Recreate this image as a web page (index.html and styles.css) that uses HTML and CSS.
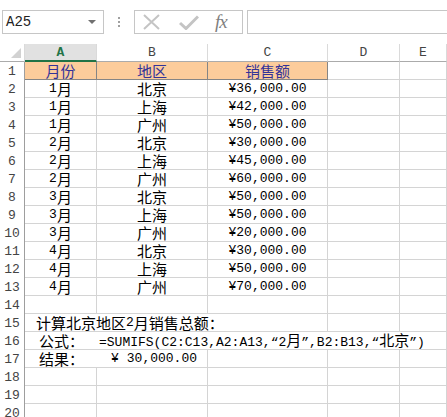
FILE: index.html
```html
<!DOCTYPE html>
<html>
<head>
<meta charset="utf-8">
<link rel="stylesheet" href="styles.css">
</head>
<body>
<div class="toolbar">
  <div class="namebox"><span class="nb-text">A25</span><span class="dd"></span></div>
  <div class="dots"><i></i><i></i><i></i></div>
  <div class="fxbox">
    <svg class="ico-x" width="17" height="16" viewBox="0 0 17 16"><path d="M1 1 L16 15 M16 1 L1 15" stroke="#c4c4c4" stroke-width="2" fill="none"/></svg>
    <svg class="ico-ok" width="20" height="15" viewBox="0 0 20 15"><path d="M1 8 L7 13.5 L19 1.5" stroke="#c4c4c4" stroke-width="3" fill="none"/></svg>
    <span class="fx">fx</span>
  </div>
  <div class="formula"></div>
</div>
<div class="sheet">
  <div class="corner"><span class="tri"></span></div>
  <div class="h sel">A</div><div class="h">B</div><div class="h">C</div><div class="h">D</div><div class="h">E</div>

  <div class="r">1</div><div class="c p"><span class="z">月份</span></div><div class="c p"><span class="z">地区</span></div><div class="c p"><span class="z">销售额</span></div><div class="c"></div><div class="c"></div>

  <div class="r">2</div><div class="c">1<span class="z">月</span></div><div class="c"><span class="z">北京</span></div><div class="c">¥36,000.00</div><div class="c"></div><div class="c"></div>
  <div class="r">3</div><div class="c">1<span class="z">月</span></div><div class="c"><span class="z">上海</span></div><div class="c">¥42,000.00</div><div class="c"></div><div class="c"></div>
  <div class="r">4</div><div class="c">1<span class="z">月</span></div><div class="c"><span class="z">广州</span></div><div class="c">¥50,000.00</div><div class="c"></div><div class="c"></div>
  <div class="r">5</div><div class="c">2<span class="z">月</span></div><div class="c"><span class="z">北京</span></div><div class="c">¥30,000.00</div><div class="c"></div><div class="c"></div>
  <div class="r">6</div><div class="c">2<span class="z">月</span></div><div class="c"><span class="z">上海</span></div><div class="c">¥45,000.00</div><div class="c"></div><div class="c"></div>
  <div class="r">7</div><div class="c">2<span class="z">月</span></div><div class="c"><span class="z">广州</span></div><div class="c">¥60,000.00</div><div class="c"></div><div class="c"></div>
  <div class="r">8</div><div class="c">3<span class="z">月</span></div><div class="c"><span class="z">北京</span></div><div class="c">¥50,000.00</div><div class="c"></div><div class="c"></div>
  <div class="r">9</div><div class="c">3<span class="z">月</span></div><div class="c"><span class="z">上海</span></div><div class="c">¥50,000.00</div><div class="c"></div><div class="c"></div>
  <div class="r">10</div><div class="c">3<span class="z">月</span></div><div class="c"><span class="z">广州</span></div><div class="c">¥20,000.00</div><div class="c"></div><div class="c"></div>
  <div class="r">11</div><div class="c">4<span class="z">月</span></div><div class="c"><span class="z">北京</span></div><div class="c">¥30,000.00</div><div class="c"></div><div class="c"></div>
  <div class="r">12</div><div class="c">4<span class="z">月</span></div><div class="c"><span class="z">上海</span></div><div class="c">¥50,000.00</div><div class="c"></div><div class="c"></div>
  <div class="r">13</div><div class="c">4<span class="z">月</span></div><div class="c"><span class="z">广州</span></div><div class="c">¥70,000.00</div><div class="c"></div><div class="c"></div>

  <div class="r">14</div><div class="c"></div><div class="c"></div><div class="c"></div><div class="c"></div><div class="c"></div>

  <div class="r">15</div><div class="c left span3 t15"><span class="z">计算北京地区</span>2<span class="z">月销售总额：</span></div><div class="c"></div><div class="c"></div>

  <div class="r">16</div><div class="c left span5 t16"><span class="z lab">公式：</span><span class="f">=SUMIFS(C2:C13,A2:A13,“2<span class="z">月</span>”,B2:B13,“<span class="z">北京</span>”)</span></div>

  <div class="r">17</div><div class="c left span2 t17"><span class="z lab">结果：</span><span class="yen">¥</span><span class="amt">30,000.00</span></div><div class="c"></div><div class="c"></div><div class="c"></div>

  <div class="r">18</div><div class="c"></div><div class="c"></div><div class="c"></div><div class="c"></div><div class="c"></div>
  <div class="r">19</div><div class="c"></div><div class="c"></div><div class="c"></div><div class="c"></div><div class="c"></div>
  <div class="r">20</div><div class="c"></div><div class="c"></div><div class="c"></div><div class="c"></div><div class="c"></div>
</div>
</body>
</html>
```

FILE: styles.css
```css
html, body {
  margin: 0;
  padding: 0;
  background: #ffffff;
  overflow: hidden;
}
body {
  width: 447px;
  height: 417px;
  font-family: "Liberation Mono", "Noto Sans CJK SC", monospace;
  font-size: 13px;
  color: #000;
}
.z {
  font-family: "Noto Sans CJK SC", sans-serif;
  font-size: 15px;
  line-height: 15px;
}

/* toolbar */
.toolbar {
  height: 44px;
  box-sizing: border-box;
  padding-top: 10px;
  display: flex;
  align-items: flex-start;
  overflow: hidden;
}
.toolbar > * {
  flex-shrink: 0;
}
.namebox {
  margin-left: 2px;
  width: 102px;
  height: 24px;
  box-sizing: border-box;
  border: 1px solid #c6c6c6;
  display: flex;
  align-items: center;
  justify-content: space-between;
  padding: 0 7px 0 3px;
}
.nb-text {
  font-size: 14px;
  color: #222;
}
.dd {
  width: 0;
  height: 0;
  border-left: 4px solid transparent;
  border-right: 4px solid transparent;
  border-top: 4px solid #707070;
}
.dots {
  margin-left: 14px;
  width: 2px;
  height: 24px;
  display: flex;
  flex-direction: column;
  justify-content: center;
  gap: 2px;
}
.dots i {
  display: block;
  width: 2px;
  height: 2px;
  background: #a0a0a0;
}
.fxbox {
  margin-left: 14px;
  width: 109px;
  height: 24px;
  box-sizing: border-box;
  border: 1px solid #c6c6c6;
  display: flex;
  align-items: center;
  padding-left: 8px;
}
.ico-x { margin-right: 19px; }
.ico-ok { margin-right: 16px; }
.fx {
  font-family: "Liberation Serif", serif;
  font-style: italic;
  font-size: 19px;
  line-height: 20px;
  color: #7f7f7f;
  letter-spacing: -1px;
}
.formula {
  margin-left: 4px;
  width: 220px;
  height: 24px;
  box-sizing: border-box;
  border: 1px solid #c6c6c6;
}

/* sheet */
.sheet {
  display: grid;
  grid-template-columns: 25px 72px 111px 120px 72px 47px;
  grid-auto-rows: 18px;
}
.corner {
  box-sizing: border-box;
  border-bottom: 1px solid #ababab;
  border-right: 1px solid #dadada;
  position: relative;
}
.tri {
  position: absolute;
  right: 3px;
  bottom: 3px;
  width: 0;
  height: 0;
  border-left: 10px solid transparent;
  border-bottom: 10px solid #d2d2d2;
}
.h {
  box-sizing: border-box;
  border-right: 1px solid #dadada;
  border-bottom: 1px solid #ababab;
  display: flex;
  align-items: center;
  justify-content: center;
  color: #444;
  font-size: 13px;
  line-height: 15px;
}
.h.sel {
  background: #e1e1e1;
  color: #217346;
  font-weight: bold;
  border-bottom: 2px solid #217346;
}
.r {
  box-sizing: border-box;
  border-right: 1px solid #9e9e9e;
  display: flex;
  align-items: center;
  justify-content: center;
  color: #444;
  font-size: 13px;
  line-height: 15px;
  padding-top: 1px;
}
.c {
  box-sizing: border-box;
  border-right: 1px solid #d4d4d4;
  border-bottom: 1px solid #d4d4d4;
  display: flex;
  align-items: center;
  justify-content: center;
  white-space: nowrap;
  line-height: 15px;
  overflow: visible;
}
.c.p {
  background: #fccc9b;
  color: #333399;
  border-right-color: #858585;
  border-bottom-color: #858585;
}
.c.left {
  justify-content: flex-start;
}
.span2 { grid-column: span 2; }
.span3 { grid-column: span 3; }
.span5 { grid-column: span 5; }
.t15 { padding-left: 11px; }
.t16 { padding-left: 14px; }
.t17 { padding-left: 14px; }
.lab { display: inline-block; width: 60px; }
.yen { margin-left: 12px; margin-right: 8px; }
```
